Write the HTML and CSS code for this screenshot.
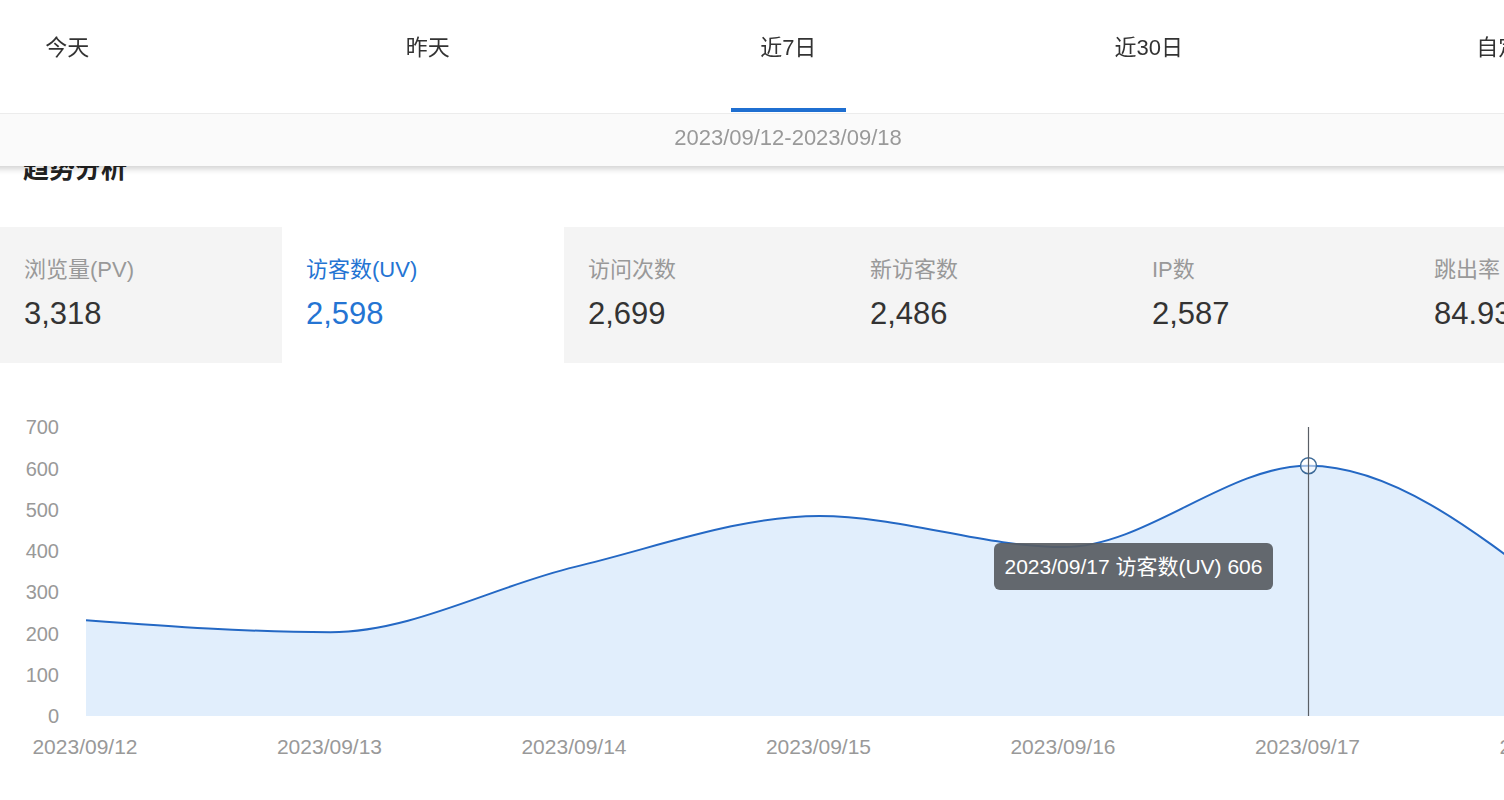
FILE: index.html
```html
<!DOCTYPE html>
<html lang="zh-CN">
<head>
<meta charset="utf-8">
<title>趋势分析</title>
<link rel="stylesheet" href="styles.css">
</head>
<body>
<header class="header">
  <nav class="tabs">
    <div class="tab">今天</div>
    <div class="tab">昨天</div>
    <div class="tab active">近7日</div>
    <div class="tab">近30日</div>
    <div class="tab">自定义</div>
  </nav>
  <div class="date-bar">2023/09/12-2023/09/18</div>
</header>

<main class="main">
  <h2 class="title">趋势分析</h2>

  <section class="metrics">
    <div class="metric">
      <div class="metric-label">浏览量(PV)</div>
      <div class="metric-value">3,318</div>
    </div>
    <div class="metric active">
      <div class="metric-label">访客数(UV)</div>
      <div class="metric-value">2,598</div>
    </div>
    <div class="metric">
      <div class="metric-label">访问次数</div>
      <div class="metric-value">2,699</div>
    </div>
    <div class="metric">
      <div class="metric-label">新访客数</div>
      <div class="metric-value">2,486</div>
    </div>
    <div class="metric">
      <div class="metric-label">IP数</div>
      <div class="metric-value">2,587</div>
    </div>
    <div class="metric">
      <div class="metric-label">跳出率</div>
      <div class="metric-value">84.93%</div>
    </div>
  </section>

  <section class="chart">
    <svg class="chart-svg" width="1504" height="437" viewBox="0 363 1504 437" xmlns="http://www.w3.org/2000/svg">
      <g class="y-axis">
        <text x="59" y="434.2">700</text>
        <text x="59" y="475.5">600</text>
        <text x="59" y="516.8">500</text>
        <text x="59" y="558.1">400</text>
        <text x="59" y="599.4">300</text>
        <text x="59" y="640.6">200</text>
        <text x="59" y="681.9">100</text>
        <text x="59" y="723.2">0</text>
      </g>
      <path class="area" d="M86,620.2 C167.5,626.2 249,632.2 330.5,632.2 C412,632.2 493.5,586.25 575,566.9 C656.5,547.55 738,516.1 819.5,516.1 C901,516.1 982.5,547.1 1064,547.1 C1145.5,547.1 1227,465.7 1308.5,465.7 C1390,465.7 1471.5,528.3 1553,590.9 L1553,716 L86,716 Z"/>
      <path class="line" d="M86,620.2 C167.5,626.2 249,632.2 330.5,632.2 C412,632.2 493.5,586.25 575,566.9 C656.5,547.55 738,516.1 819.5,516.1 C901,516.1 982.5,547.1 1064,547.1 C1145.5,547.1 1227,465.7 1308.5,465.7 C1390,465.7 1471.5,528.3 1553,590.9"/>
      <circle class="marker" cx="1308.5" cy="465.7" r="8"/>
      <line class="crosshair" x1="1308.5" y1="427" x2="1308.5" y2="716"/>
      <g class="x-axis">
        <text x="85" y="753.5">2023/09/12</text>
        <text x="329.5" y="753.5">2023/09/13</text>
        <text x="574" y="753.5">2023/09/14</text>
        <text x="818.5" y="753.5">2023/09/15</text>
        <text x="1063" y="753.5">2023/09/16</text>
        <text x="1307.5" y="753.5">2023/09/17</text>
        <text x="1552" y="753.5">2023/09/18</text>
      </g>
    </svg>
    <div class="tooltip">2023/09/17 访客数(UV) 606</div>
  </section>
</main>
</body>
</html>
```

FILE: styles.css
```css
html, body {
  margin: 0;
  padding: 0;
}

body {
  width: 1504px;
  height: 800px;
  overflow: hidden;
  background: #ffffff;
  font-family: "Liberation Sans", "Noto Sans CJK SC", sans-serif;
  color: #333333;
}

.header {
  position: fixed;
  top: 0;
  left: -113px;
  width: 1802px;
  z-index: 10;
  background: #ffffff;
  box-shadow: 0 3px 6px rgba(0, 0, 0, 0.18);
}

.tabs {
  display: flex;
  height: 113px;
  border-bottom: 1px solid #ececec;
}

.tab {
  flex: none;
  width: 360.5px;
  position: relative;
  text-align: center;
  font-size: 22px;
  line-height: 30px;
  padding-top: 33px;
  box-sizing: border-box;
  color: #333333;
}

.tab.active::after {
  content: "";
  position: absolute;
  left: 50%;
  bottom: 1px;
  width: 115px;
  height: 4px;
  margin-left: -57.5px;
  background: #1f6fd1;
}

.date-bar {
  height: 52px;
  box-sizing: border-box;
  padding-bottom: 4px;
  line-height: 48px;
  text-align: center;
  font-size: 22px;
  color: #999999;
  background: #fafafa;
}

.main {
  padding-top: 151px;
}

.title {
  margin: 0 0 40px 0;
  padding-left: 23px;
  font-size: 26px;
  line-height: 36px;
  font-weight: bold;
  color: #222222;
}

.metrics {
  display: grid;
  grid-template-columns: repeat(6, 282px);
  height: 136px;
  background: #f4f4f4;
  width: 1504px;
  overflow: hidden;
}

.metric {
  padding: 30px 0 0 24px;
  box-sizing: border-box;
}

.metric.active {
  background: #ffffff;
}

.metric-label {
  font-size: 22px;
  line-height: 26px;
  color: #999999;
  white-space: nowrap;
}

.metric-value {
  margin-top: 13px;
  font-size: 31px;
  line-height: 36px;
  color: #333333;
  white-space: nowrap;
}

.metric.active .metric-label,
.metric.active .metric-value {
  color: #2474d3;
}

.chart {
  position: relative;
  height: 437px;
}

.chart-svg {
  display: block;
}

.y-axis text {
  font-family: "Liberation Sans", sans-serif;
  font-size: 20px;
  fill: #999999;
  text-anchor: end;
}

.x-axis text {
  font-family: "Liberation Sans", sans-serif;
  font-size: 21px;
  fill: #999999;
  text-anchor: middle;
}

.area {
  fill: #e1eefc;
  stroke: none;
}

.line {
  fill: none;
  stroke: #2468c4;
  stroke-width: 2;
}

.marker {
  fill: rgba(255, 255, 255, 0.55);
  stroke: #3c6a98;
  stroke-width: 1.5;
}

.crosshair {
  stroke: #5a5f66;
  stroke-width: 1.2;
}

.tooltip {
  position: absolute;
  left: 994px;
  top: 180px;
  width: 279px;
  height: 47px;
  border-radius: 6px;
  background: rgba(88, 92, 98, 0.92);
  color: #ffffff;
  font-size: 21px;
  line-height: 47px;
  text-align: center;
  white-space: nowrap;
}
```
